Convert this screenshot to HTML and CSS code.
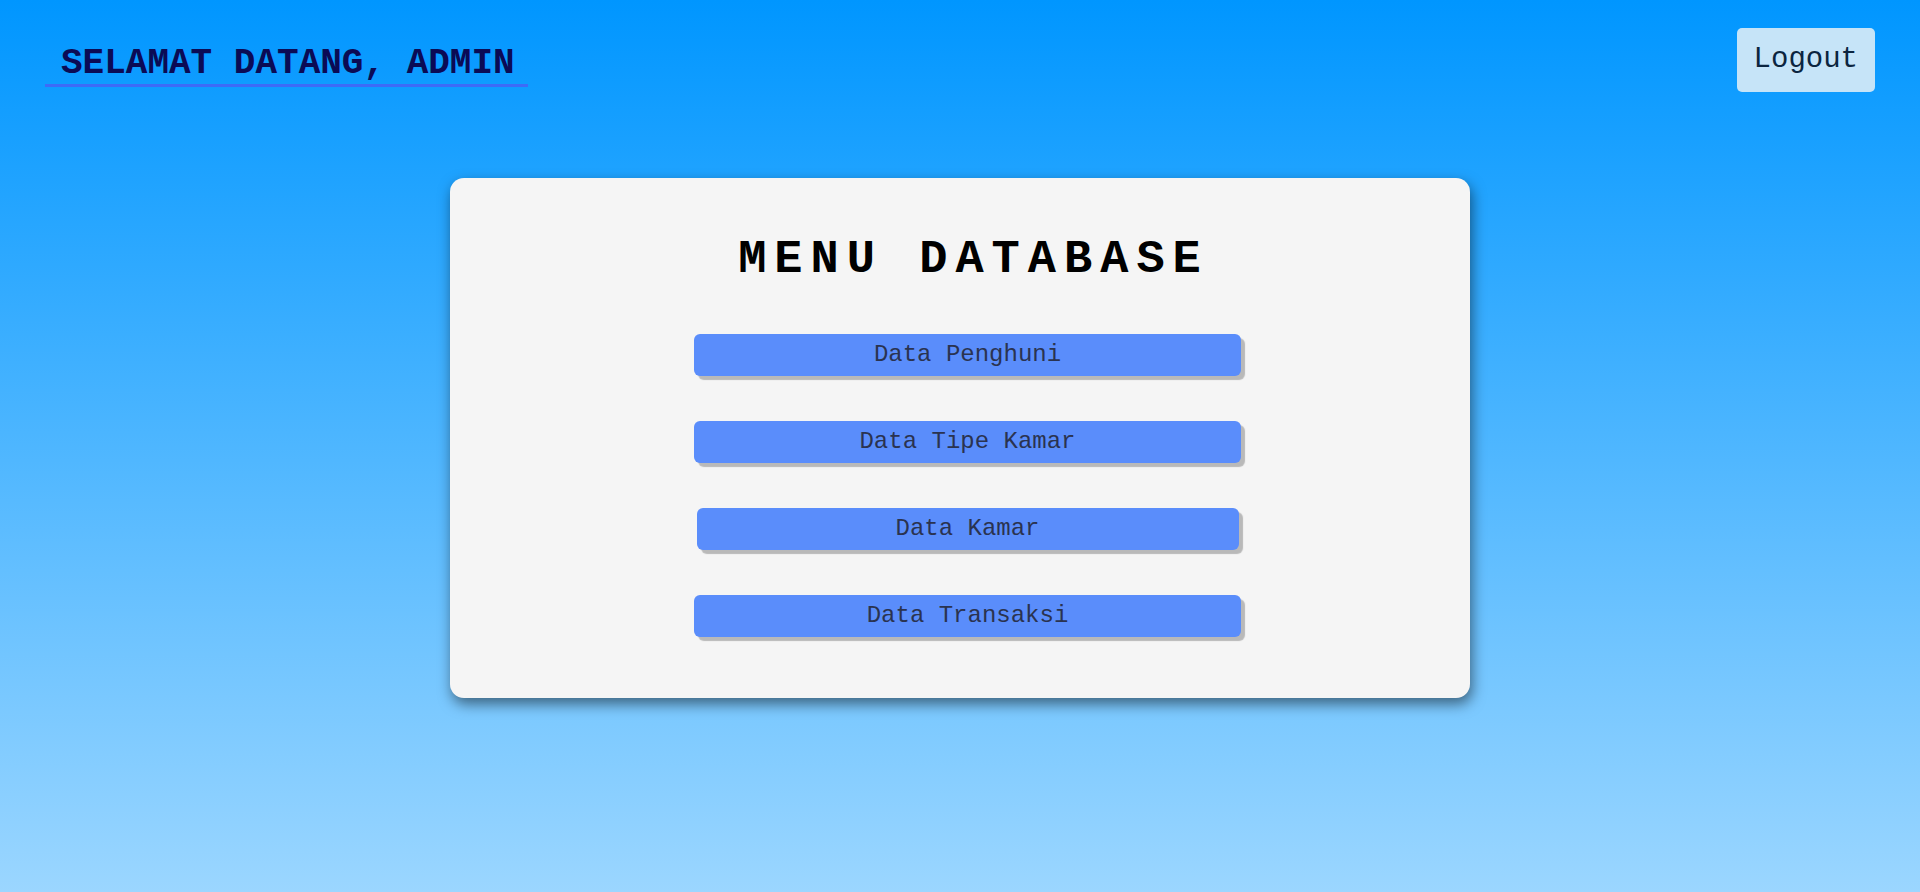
FILE: index.html
```html
<!DOCTYPE html>
<html lang="id">
<head>
<meta charset="utf-8">
<title>Menu Database</title>
<link rel="stylesheet" href="styles.css">
</head>
<body>
  <header class="topbar">
    <h1 class="welcome">SELAMAT DATANG, ADMIN</h1>
    <a class="logout" href="#">Logout</a>
  </header>
  <main class="main">
    <section class="card">
      <h2 class="card-title">MENU DATABASE</h2>
      <nav class="menu">
        <a class="menu-btn" href="#">Data Penghuni</a>
        <a class="menu-btn" href="#">Data Tipe Kamar</a>
        <a class="menu-btn menu-btn-narrow" href="#">Data Kamar</a>
        <a class="menu-btn" href="#">Data Transaksi</a>
      </nav>
    </section>
  </main>
</body>
</html>
```
FILE: styles.css
```css
html, body {
  margin: 0;
  padding: 0;
}
body {
  min-height: 100vh;
  background: linear-gradient(180deg, #0096ff 0%, #9bd6ff 100%);
  font-family: "Courier New", "Liberation Mono", monospace;
}
.topbar {
  display: flex;
  justify-content: space-between;
  align-items: flex-start;
  padding: 28px 45px 0 45px;
}
.welcome {
  margin: 15px 0 0 0;
  padding: 0 13px 0 16px;
  font-size: 36px;
  font-weight: bold;
  color: #0b0b55;
  border-bottom: 3px solid #3d6bf7;
  line-height: 41px;
}
.logout {
  display: block;
  padding: 15px 17px;
  font-size: 29px;
  line-height: 34px;
  font-weight: normal;
  color: #0b2540;
  background: #c6e4f8;
  border-radius: 5px;
  text-decoration: none;
}
.main {
  display: flex;
  justify-content: center;
  padding-top: 86px;
}
.card {
  box-sizing: border-box;
  width: 1020px;
  padding: 55px 45px 61px 60px;
  background: #f5f5f5;
  border-radius: 14px;
  box-shadow: 2px 6px 14px rgba(0, 0, 0, 0.5);
}
.card-title {
  margin: 0 0 47px 0;
  padding-left: 12px;
  text-align: center;
  font-size: 47px;
  line-height: 54px;
  font-weight: bold;
  letter-spacing: 8px;
  color: #000;
}
.menu {
  display: flex;
  flex-direction: column;
  align-items: center;
  gap: 45px;
}
.menu-btn {
  display: block;
  width: 547px;
  height: 42px;
  line-height: 42px;
  text-align: center;
  font-size: 24px;
  color: #2a3350;
  background: #5a8dfb;
  border-radius: 6px;
  box-shadow: 4px 4px 1px #b9b9b9;
  text-decoration: none;
}
.menu-btn-narrow {
  width: 542px;
}
```
